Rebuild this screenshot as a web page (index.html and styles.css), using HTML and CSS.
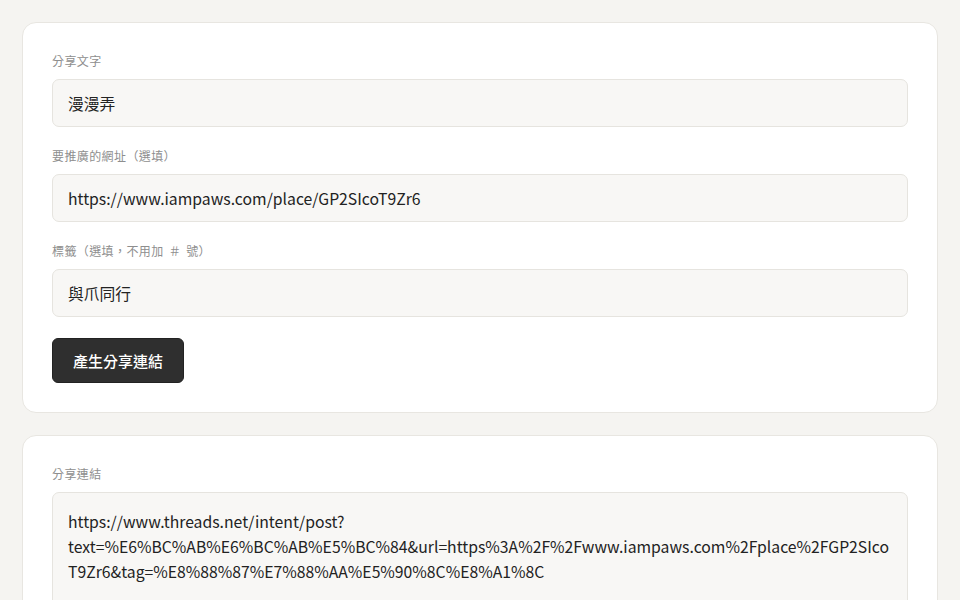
FILE: index.html
```html
<!DOCTYPE html>
<html lang="zh-Hant">
<head>
<meta charset="UTF-8">
<meta name="viewport" content="width=device-width, initial-scale=1.0">
<title>Threads 分享連結產生器</title>
<link rel="stylesheet" href="styles.css">
</head>
<body>
<div class="container">
    <div class="card">
        <div class="field">
            <label for="shareText">分享文字</label>
            <input id="shareText" type="text" value="漫漫弄">
        </div>
        <div class="field">
            <label for="shareUrl">要推廣的網址（選填）</label>
            <input id="shareUrl" type="text" value="https://www.iampaws.com/place/GP2SIcoT9Zr6">
        </div>
        <div class="field">
            <label for="shareTag">標籤（選填，不用加 ＃ 號）</label>
            <input id="shareTag" type="text" value="與爪同行">
        </div>
        <button class="btn" type="button">產生分享連結</button>
    </div>

    <div class="card">
        <div class="field">
            <label>分享連結</label>
            <div class="result">https://www.threads.net/intent/post?text=%E6%BC%AB%E6%BC%AB%E5%BC%84&amp;url=https%3A%2F%2Fwww.iampaws.com%2Fplace%2FGP2SIcoT9Zr6&amp;tag=%E8%88%87%E7%88%AA%E5%90%8C%E8%A1%8C</div>
        </div>
    </div>
</div>
</body>
</html>
```

FILE: styles.css
```css
body, html {
    margin: 0;
    background-color: #f5f4f1;
    font-family: "Noto Sans CJK TC", "Noto Sans", sans-serif;
    color: #222;
}

.container {
    padding: 22px 22px 0;
}

.card {
    background-color: #fff;
    border: 1px solid #e8e6e1;
    border-radius: 14px;
    padding: 29px;
    margin-bottom: 22px;
}

.field {
    margin-bottom: 20px;
}

.field label {
    display: block;
    font-size: 12px;
    line-height: 18px;
    letter-spacing: 0.4px;
    word-spacing: 2px;
    color: #8e8e8e;
    margin-bottom: 9px;
}

.field input, .result {
    display: block;
    box-sizing: border-box;
    width: 100%;
    margin: 0;
    font-family: inherit;
    font-size: 15.75px;
    color: #222;
    background-color: #f8f7f5;
    border: 1px solid #e6e4df;
    border-radius: 7px;
}

.field input {
    height: 48px;
    padding: 0 15px;
    outline: none;
}

.result {
    padding: 16px 15px 15px;
    line-height: 25px;
    overflow-wrap: anywhere;
    min-height: 120px;
}

.btn {
    display: block;
    margin-top: 21px;
    height: 45px;
    padding: 0 20px;
    background-color: #2f2f2f;
    color: #fff;
    border: 1px solid #222;
    border-radius: 6px;
    font-family: inherit;
    font-size: 15px;
    font-weight: 500;
    cursor: pointer;
}
```
